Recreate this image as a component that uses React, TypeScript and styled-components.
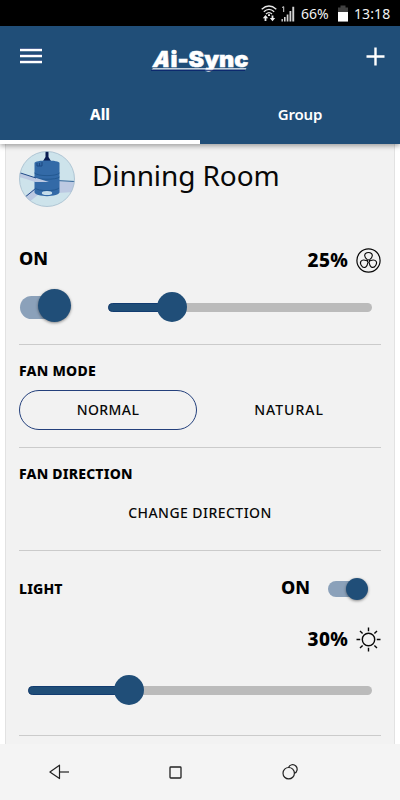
import React from "react";
import styled, { createGlobalStyle } from "styled-components";

const NAVY = "#204e78";
const PANEL = "#f2f2f2";

const GlobalStyle = createGlobalStyle`
  * { box-sizing: border-box; }
  body { margin: 0; background: #fff; font-family: "Noto Sans", sans-serif; color: #080808; }
  button { font: inherit; color: inherit; background: none; border: 0; padding: 0; }
  svg { display: block; flex: none; }
`;

const Screen = styled.div`
  width: 400px;
  height: 800px;
  display: flex;
  flex-direction: column;
  overflow: hidden;
  background: #fff;
`;

const StatusBar = styled.div`
  height: 26px;
  flex: none;
  background: #000;
  color: #f2f2f2;
  display: flex;
  align-items: center;
  justify-content: flex-end;
  padding: 1px 9px 0 0;
  font-size: 14px;
`;

const Signals = styled.div`
  display: flex;
  align-items: center;
  gap: 4px;
`;

const Percent = styled.span`
  width: 28px;
  margin: 0 8px 0 6px;
`;

const Clock = styled.span`
  width: 37px;
  margin-left: 5px;
  letter-spacing: 0.1px;
`;

const Header = styled.header`
  flex: none;
  height: 118px;
  background: ${NAVY};
  display: flex;
  flex-direction: column;
  position: relative;
  z-index: 1;
  box-shadow: 0 2px 5px rgba(0, 0, 0, 0.35);
`;

const TitleBar = styled.div`
  height: 60px;
  display: flex;
  align-items: center;
  justify-content: space-between;
  padding: 0 15px 0 20px;
`;

const Brand = styled.div`
  padding-right: 8px;
`;

const Tabs = styled.nav`
  flex: 1;
  display: grid;
  grid-template-columns: 1fr 1fr;
`;

const Tab = styled.button<{ $active?: boolean }>`
  color: #fff;
  font-size: 15px;
  font-weight: ${(p) => (p.$active ? 800 : 600)};
  letter-spacing: ${(p) => (p.$active ? "0" : "-0.15px")};
  border-bottom: 4px solid ${(p) => (p.$active ? "#fff" : NAVY)};
  padding-top: 1px;
`;

const Card = styled.main`
  flex: 1;
  min-height: 0;
  margin: 0 5px;
  padding: 0 13px;
  background: ${PANEL};
  border: solid #e2e2e2;
  border-width: 0 1px;
  overflow: hidden;
`;

const Section = styled.section<{ $height: number }>`
  height: ${(p) => p.$height}px;
  border-bottom: 1px solid #cbcbcb;
  display: flex;
  flex-direction: column;
`;

const RoomRow = styled.div`
  display: flex;
  align-items: center;
  height: 56px;
  margin-top: 7px;
  gap: 17px;
`;

const RoomName = styled.h1`
  margin: -8px 0 0;
  font-size: 28px;
  font-weight: 400;
  line-height: 38px;
  letter-spacing: -0.1px;
  white-space: nowrap;
`;

const Row = styled.div<{ $height: number; $top?: number }>`
  height: ${(p) => p.$height}px;
  margin-top: ${(p) => p.$top ?? 0}px;
  display: flex;
  align-items: center;
  justify-content: space-between;
`;

const Reading = styled.div`
  display: flex;
  align-items: center;
  gap: 8px;
  margin-left: auto;
`;

const Value = styled.span<{ $numeric?: boolean }>`
  font-size: ${(p) => (p.$numeric ? 19 : 18)}px;
  font-weight: 800;
  line-height: 24px;
  color: #000;
  letter-spacing: ${(p) => (p.$numeric ? 0.3 : 0)}px;
`;

const PowerState = styled(Value)`
  padding-bottom: 4px;
`;

const Label = styled.h2<{ $spacing?: number }>`
  margin: 0;
  font-size: 14px;
  font-weight: 800;
  line-height: 20px;
  color: #000;
  letter-spacing: ${(p) => p.$spacing ?? 0}px;
`;

const SwitchTrack = styled.div<{ $large?: boolean }>`
  width: ${(p) => (p.$large ? 51 : 40)}px;
  height: ${(p) => (p.$large ? 23 : 16)}px;
  border-radius: 12px;
  background: linear-gradient(90deg, #8ba1ba 75%, transparent 75%);
  display: flex;
  align-items: center;
  justify-content: flex-end;
`;

const SwitchThumb = styled.div<{ $large?: boolean }>`
  width: ${(p) => (p.$large ? 33 : 22)}px;
  height: ${(p) => (p.$large ? 33 : 22)}px;
  margin-top: ${(p) => (p.$large ? -3 : 0)}px;
  flex: none;
  border-radius: 50%;
  background: ${NAVY};
  box-shadow: 0 1px 3px rgba(0, 0, 0, 0.45);
`;

const SliderRow = styled.div`
  height: 34px;
  margin-top: 17px;
  padding: 0 9px 0 1px;
  display: flex;
  align-items: center;
  justify-content: space-between;
`;

const Track = styled.div<{ $width: number }>`
  width: ${(p) => p.$width}px;
  height: 9px;
  border-radius: 5px;
  background: #bbb;
  display: flex;
  align-items: center;
`;

const Fill = styled.div<{ $width: number }>`
  width: ${(p) => p.$width}px;
  height: 9px;
  border-radius: 5px 0 0 5px;
  background: ${NAVY};
  border: 1px solid #123c70;
`;

const Knob = styled.div`
  width: 30px;
  height: 30px;
  margin-left: -15px;
  flex: none;
  border-radius: 50%;
  background: ${NAVY};
`;

const Modes = styled.div`
  margin-top: 9px;
  display: grid;
  grid-template-columns: 178px 178px;
  column-gap: 3px;
`;

const Option = styled.button<{ $selected?: boolean; $spacing?: number }>`
  height: 40px;
  border: 1px solid ${(p) => (p.$selected ? "#24407c" : "transparent")};
  border-radius: 20px;
  font-size: 14px;
  font-weight: 500;
  letter-spacing: ${(p) => p.$spacing ?? 0}px;
  padding-bottom: 2px;
`;

const Direction = styled(Option)`
  margin-top: 9px;
`;

const LightState = styled.div`
  display: flex;
  align-items: center;
  gap: 18px;
  padding-right: 13px;
`;

const LightLevel = styled.div`
  margin-top: 23px;
  padding: 0 9px;
  height: 30px;
  display: flex;
  align-items: center;
`;

const NavBar = styled.footer`
  flex: none;
  height: 56px;
  background: #f4f4f4;
  display: grid;
  grid-template-columns: 118px 114px 115px;
  justify-items: center;
  align-items: center;
`;

const Slider = ({ width, fill }: { width: number; fill: number }) => (
  <Track $width={width}>
    <Fill $width={fill} />
    <Knob />
  </Track>
);

const Switch = ({ large }: { large?: boolean }) => (
  <SwitchTrack $large={large}>
    <SwitchThumb $large={large} />
  </SwitchTrack>
);

const WifiIcon = () => (
  <svg width="16" height="17" viewBox="0 0 16 17" fill="none" stroke="#e8e8e8" strokeWidth="1.3">
    <path d="M.7 4.2Q8-2.2 15.3 4.2M2.8 6.7Q8 2 13.2 6.7M5 9Q8 6.3 11 9" />
    <path d="M8 9.2v1.8" strokeWidth="2" />
    <path d="M4.5 16v-3M11.5 10.5v3" strokeWidth="1.8" />
    <path d="M1.8 13.3L4.5 10l2.7 3.3zM8.8 13L11.5 16.3 14.2 13z" fill="#eee" stroke="none" />
  </svg>
);

const SignalIcon = () => (
  <svg width="14" height="16" viewBox="0 0 14 16" fill="#d2d2d2">
    <path d="M.5 13h1.4v2.5H.5zM3 11h1.6v4.5H3zM5.7 8.5h1.7v7H5.7zM8.5 5h1.8v10.5H8.5zM11.3.8h1.9v14.7h-1.9z" />
    <path d="M1 1.5L2.7.7V6" fill="none" stroke="#d2d2d2" />
  </svg>
);

const BatteryIcon = () => (
  <svg width="12" height="17" viewBox="0 0 12 17">
    <path d="M3.5.5h5v2H11v14H1v-14h2.5z" fill="#404040" />
    <path d="M1 7h10v9.5H1z" fill="#fff" />
  </svg>
);

const MenuIcon = () => (
  <svg width="22" height="16" viewBox="0 0 22 16">
    <path d="M0 1h22M0 7h22M0 13h22" stroke="#102c70" strokeWidth="1.6" />
    <path d="M0 2h22M0 8h22M0 14h22" stroke="#fff" strokeWidth="2.4" />
  </svg>
);

const PlusIcon = () => (
  <svg width="19" height="19" viewBox="0 0 19 19" stroke="#fff" strokeWidth="2.4">
    <path d="M9.5.5v18M.5 9.5h18" />
  </svg>
);

const Logo = () => (
  <svg width="100" height="36" viewBox="0 0 100 36" overflow="visible" fill="#fff" stroke="#fff" strokeWidth=".5" fontFamily="Inter, sans-serif" fontWeight="900">
    <text x="9.500" y="29" fontSize="22" textLength="17" lengthAdjust="spacingAndGlyphs" transform="skewX(-15)">A</text>
    <text x="20.500" y="29" fontSize="22" textLength="78" lengthAdjust="spacingAndGlyphs">i-Sync</text>
    <path d="M3 30.300H96.500L95.500 31.500H1.500z" stroke="none" />
    <path d="M1 32.300h94" stroke="#08216c" strokeWidth="1" />
  </svg>
);

const RoomPicture = () => (
  <svg width="56" height="56" viewBox="0 0 56 56">
    <defs>
      <clipPath id="room"><circle cx="28" cy="28" r="27.6" /></clipPath>
    </defs>
    <g clipPath="url(#room)">
      <path d="M0 0h56v56H0z" fill="#cde3eb" />
      <path d="M38 30l18 1v10l-18 1z" fill="#bcc9e2" />
      <path d="M37 29.500l19 1" stroke="#2d6096" />
      <path d="M16 37L5 46l4 6 11-9z" fill="#bcc9e2" />
      <path d="M16 38L5 47" stroke="#214b88" />
      <path d="M26.500 0h3v6l3 5h-9l3-5z" fill="#081b50" />
      <path d="M15.500 12c0-3.500 25-3.500 25 0v29c0 5.500-25 5.500-25 0z" fill="#336aa7" />
      <path d="M15.500 22c3 3.500 22 3.500 25 0M15.500 26c3 3 22 3 25 0M16 37c3 3.500 21 3.500 24 0" fill="none" stroke="#245991" />
      <path d="M18 12v3h5v-4M20.500 12v3" fill="none" stroke="#1c4882" />
      <path d="M0 21.500L30 31 16 31Q8 28 0 26z" fill="#bcc9e2" />
      <path d="M0 21.500l17 5.500" stroke="#214b88" />
      <ellipse cx="28" cy="42" rx="5.200" ry="2" fill="#c5ddea" />
    </g>
    <circle cx="28" cy="28" r="27.500" fill="none" stroke="#a5bdcd" strokeWidth=".8" />
  </svg>
);

const FanIcon = () => (
  <svg width="25" height="25" viewBox="0 0 25 25" fill="none" stroke="#080808" strokeWidth="1.1">
    <circle cx="12.5" cy="12.5" r="11.6" strokeWidth="1.2" />
    <circle cx="12.5" cy="13" r="1.2" />
    {[0, 120, 240].map((angle) => (
      <path key={angle} transform={`rotate(${angle} 12.5 13)`} d="M11.500 11.800C10 10.500 8.700 9 8.700 7.700c0-4.200 7.600-4.200 7.600 0 0 1.300-1.300 2.800-2.800 4.100" />
    ))}
  </svg>
);

const SunIcon = () => (
  <svg width="25" height="25" viewBox="0 0 25 25" fill="none" stroke="#080808" strokeWidth="1.4">
    <circle cx="12.5" cy="12.5" r="6.2" />
    <path d="M12.500.5v3.700M12.500 20.800v3.700M.5 12.500h3.700M20.800 12.500h3.700M4 4l2.600 2.600M18.400 18.400L21 21M4 21l2.600-2.600M18.400 6.600L21 4" />
  </svg>
);

const BackIcon = () => (
  <svg width="20" height="16" viewBox="0 0 20 16" fill="none" stroke="#222" strokeWidth="1.2">
    <path d="M10.500 1.200v13.400L.9 8z" strokeLinejoin="round" />
    <path d="M10.500 8H20" />
  </svg>
);

const HomeIcon = () => (
  <svg width="13" height="13" viewBox="0 0 13 13" fill="none" stroke="#222" strokeWidth="1.3">
    <rect x="1" y="1" width="11" height="11" rx=".8" />
  </svg>
);

const RecentIcon = () => (
  <svg width="16" height="16" viewBox="0 0 16 16" fill="none" stroke="#222" strokeWidth="1.2">
    <circle cx="6.7" cy="9.2" r="5.7" />
    <path d="M6.500 3.400a4.500 4.500 0 1 1 5.900 5.900" />
  </svg>
);

export default function App() {
  return (
    <Screen>
      <GlobalStyle />
      <StatusBar>
        <Signals>
          <WifiIcon />
          <SignalIcon />
        </Signals>
        <Percent>66%</Percent>
        <BatteryIcon />
        <Clock>13:18</Clock>
      </StatusBar>
      <Header>
        <TitleBar>
          <MenuIcon />
          <Brand>
            <Logo />
          </Brand>
          <PlusIcon />
        </TitleBar>
        <Tabs>
          <Tab $active>All</Tab>
          <Tab>Group</Tab>
        </Tabs>
      </Header>
      <Card>
        <Section $height={201}>
          <RoomRow>
            <RoomPicture />
            <RoomName>Dinning Room</RoomName>
          </RoomRow>
          <Row $height={26} $top={40}>
            <PowerState>ON</PowerState>
            <Reading>
              <Value $numeric>25%</Value>
              <FanIcon />
            </Reading>
          </Row>
          <SliderRow>
            <Switch large />
            <Slider width={264} fill={64} />
          </SliderRow>
        </Section>
        <Section $height={103}>
          <Row $height={20} $top={16}>
            <Label $spacing={0.25}>FAN MODE</Label>
          </Row>
          <Modes>
            <Option $selected $spacing={0.4}>NORMAL</Option>
            <Option $spacing={1}>NATURAL</Option>
          </Modes>
        </Section>
        <Section $height={103}>
          <Row $height={20} $top={16}>
            <Label $spacing={0.2}>FAN DIRECTION</Label>
          </Row>
          <Direction $spacing={0.45}>CHANGE DIRECTION</Direction>
        </Section>
        <Section $height={185}>
          <Row $height={26} $top={25}>
            <Label $spacing={0.15}>LIGHT</Label>
            <LightState>
              <PowerState>ON</PowerState>
              <Switch />
            </LightState>
          </Row>
          <Row $height={26} $top={24}>
            <Reading>
              <Value $numeric>30%</Value>
              <SunIcon />
            </Reading>
          </Row>
          <LightLevel>
            <Slider width={344} fill={101} />
          </LightLevel>
        </Section>
      </Card>
      <NavBar>
        <BackIcon />
        <HomeIcon />
        <RecentIcon />
      </NavBar>
    </Screen>
  );
}
